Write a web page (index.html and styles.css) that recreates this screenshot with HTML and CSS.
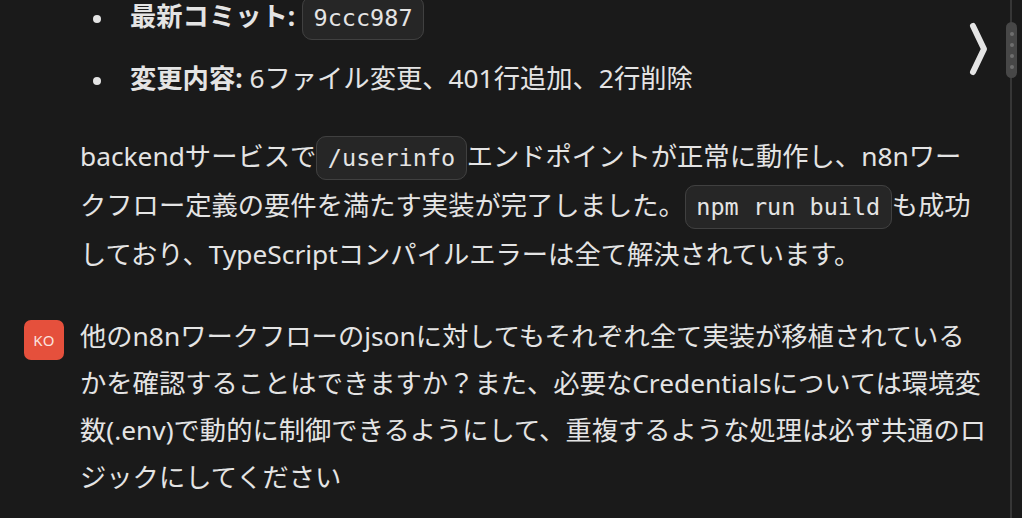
FILE: index.html
```html
<!DOCTYPE html>
<html lang="ja">
<head>
<meta charset="utf-8">
<link rel="stylesheet" href="styles.css">
</head>
<body>
<div class="chat">
  <div class="assistant">
    <ul class="summary">
      <li><strong>最新コミット:</strong> <code>9ccc987</code></li>
      <li><strong>変更内容:</strong> 6ファイル変更、401行追加、2行削除</li>
    </ul>
    <p class="para">backendサービスで<code>/userinfo</code>エンドポイントが正常に動作し、n8nワークフロー定義の要件を満たす実装が完了しました。<code>npm run build</code>も成功しており、TypeScriptコンパイルエラーは全て解決されています。</p>
  </div>
  <div class="user">
    <div class="avatar">KO</div>
    <p class="para">他のn8nワークフローのjsonに対してもそれぞれ全て実装が移植されているかを確認することはできますか？また、必要なCredentialsについては環境変数(.env)で動的に制御できるようにして、重複するような処理は必ず共通のロジックにしてください</p>
  </div>
</div>
<svg class="chevron" width="24" height="56" viewBox="0 0 24 56"><path d="M6 5 L17 28 L6 51" fill="none" stroke="#e4e4e4" stroke-width="6" stroke-linecap="round" stroke-linejoin="round"/></svg>
<div class="scrolltrack"></div>
<div class="scrollthumb"><span></span><span></span><span></span><span></span></div>
</body>
</html>
```
FILE: styles.css
```css
html, body {
  margin: 0;
  padding: 0;
  background: #1a1a1a;
  height: 100%;
  overflow: hidden;
}
body {
  font-family: "Noto Sans", "Noto Sans CJK JP", sans-serif;
  font-size: 26.3px;
  color: #e4e4e4;
  position: relative;
}
.chat {
  padding: 0 35px 0 24px;
  display: flex;
  flex-direction: column;
  gap: 35px;
}
.assistant {
  padding-left: 56px;
}
.summary {
  margin: -4px 0 0;
  padding: 0 0 0 50px;
  list-style: none;
}
.summary li {
  line-height: 40px;
  position: relative;
  margin-bottom: 20px;
}
.summary li::before {
  content: "";
  position: absolute;
  left: -37px;
  top: 19px;
  width: 8px;
  height: 8px;
  border-radius: 50%;
  background: #e4e4e4;
}
.summary strong {
  font-weight: 700;
}
.para {
  margin: 0;
  line-height: 47px;
}
.assistant .para {
  margin-top: 35px;
}
code {
  font-family: "DejaVu Sans Mono", monospace;
  font-size: 23.5px;
  background: #262626;
  border: 1px solid #404040;
  border-radius: 10px;
  padding: 7px 10.5px;
  color: #e4e4e4;
}
.user {
  display: flex;
  gap: 16px;
  align-items: flex-start;
}
.avatar {
  flex: none;
  width: 40px;
  height: 40px;
  margin-top: 7px;
  border-radius: 7px;
  background: #e5503c;
  color: #fbe3df;
  font-size: 15px;
  display: flex;
  align-items: center;
  justify-content: center;
  letter-spacing: 0.5px;
}
.chevron {
  position: absolute;
  left: 967px;
  top: 21px;
}
.scrolltrack {
  position: absolute;
  left: 1010px;
  top: 0;
  width: 2px;
  height: 100%;
  background: #363636;
}
.scrollthumb {
  position: absolute;
  left: 1006px;
  top: 22px;
  width: 11px;
  height: 56px;
  border-radius: 6px;
  background: #474747;
  display: flex;
  flex-direction: column;
  align-items: center;
  justify-content: center;
  gap: 7px;
}
.scrollthumb span {
  width: 4px;
  height: 4px;
  border-radius: 50%;
  background: #6e6e6e;
}
```
